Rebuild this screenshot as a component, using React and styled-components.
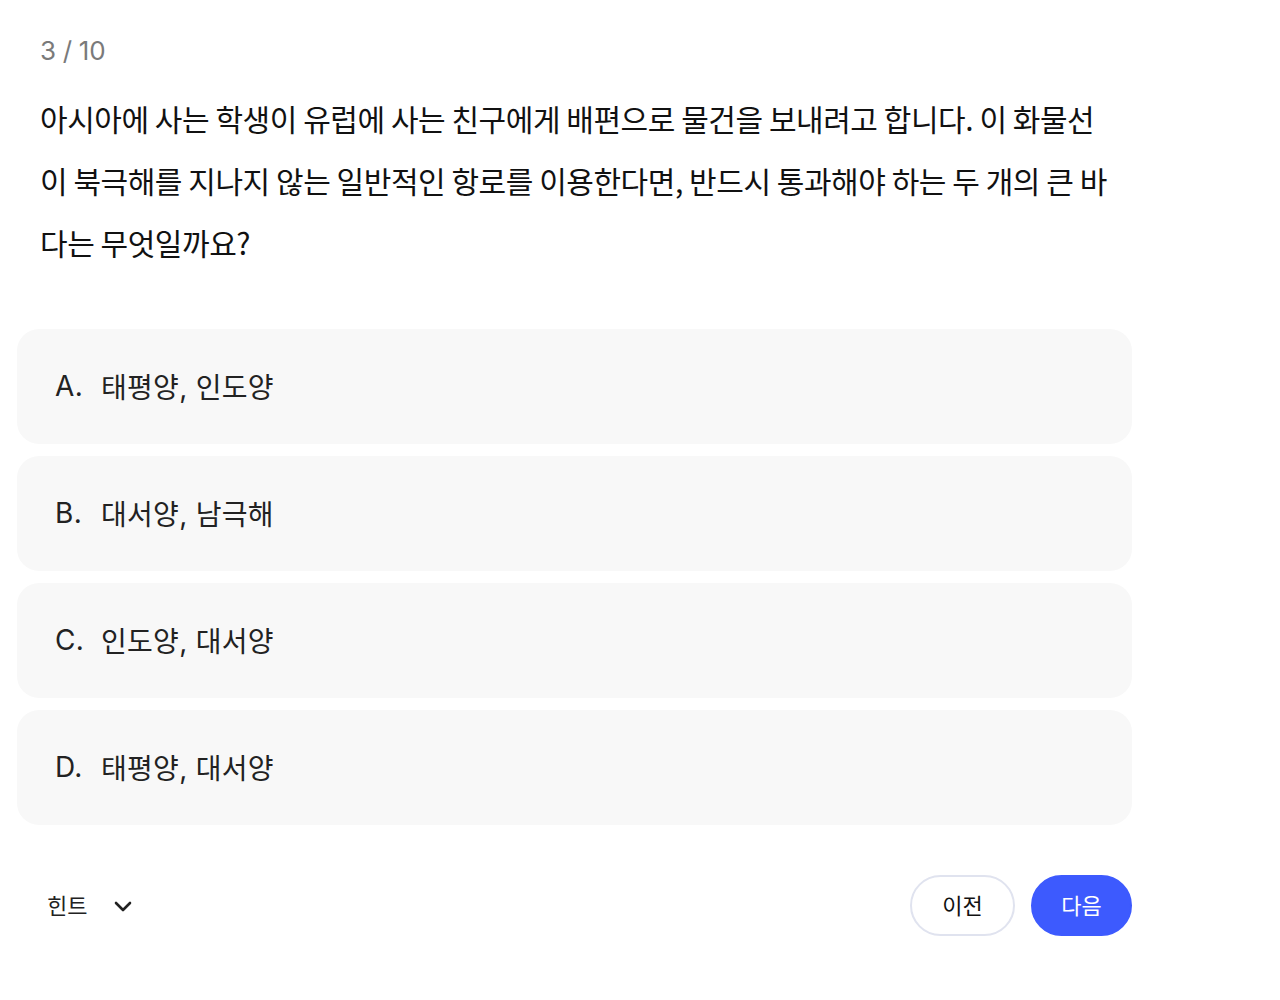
import React from 'react';
import styled, { createGlobalStyle } from 'styled-components';

const GlobalStyle = createGlobalStyle`
  *, *::before, *::after {
    box-sizing: border-box;
  }
  body {
    margin: 0;
    background: #ffffff;
    font-family: Inter, "Noto Sans CJK KR", sans-serif;
    color: #111111;
  }
`;

const question =
  '아시아에 사는 학생이 유럽에 사는 친구에게 배편으로 물건을 보내려고 합니다. 이 화물선이 북극해를 지나지 않는 일반적인 항로를 이용한다면, 반드시 통과해야 하는 두 개의 큰 바다는 무엇일까요?';

const options = [
  { key: 'A', text: '태평양, 인도양' },
  { key: 'B', text: '대서양, 남극해' },
  { key: 'C', text: '인도양, 대서양' },
  { key: 'D', text: '태평양, 대서양' },
];

const App = () => {
  return (
    <>
      <GlobalStyle />
      <Page>
        <Header>
          <Counter>3 / 10</Counter>
          <Question>{question}</Question>
        </Header>
        <OptionList>
          {options.map((o) => (
            <Option key={o.key}>
              <OptionKey>{o.key}.</OptionKey>
              <span>{o.text}</span>
            </Option>
          ))}
        </OptionList>
        <Footer>
          <HintToggle>
            힌트
            <svg width="24" height="24" viewBox="0 0 24 24" fill="none" stroke="#222" strokeWidth="2.6" strokeLinecap="round" strokeLinejoin="round">
              <path d="M5 9l7 7 7-7" />
            </svg>
          </HintToggle>
          <NavButtons>
            <NavButton>이전</NavButton>
            <NavButton primary>다음</NavButton>
          </NavButtons>
        </Footer>
      </Page>
    </>
  );
};

export default App;

// Styled Components
const Page = styled.div`
  width: 1115px;
  margin-left: 17px;
  padding-top: 33px;
  display: flex;
  flex-direction: column;
`;

const Header = styled.div`
  padding: 0 23px;
`;

const Counter = styled.div`
  font-size: 26px;
  color: #7a7a7a;
  line-height: 36px;
  letter-spacing: -0.3px;
`;

const Question = styled.p`
  margin: 18px 0 0;
  width: 1076px;
  font-family: "Noto Sans CJK KR", sans-serif;
  font-size: 30px;
  font-weight: 400;
  line-height: 62px;
  letter-spacing: -0.45px;
  color: #111111;
  word-break: break-all;
`;

const OptionList = styled.div`
  margin-top: 56px;
  display: flex;
  flex-direction: column;
  gap: 12px;
`;

const Option = styled.div`
  height: 115px;
  display: flex;
  align-items: center;
  padding: 0 0 2px 38px;
  background: #f8f8f8;
  border-radius: 22px;
  font-family: Inter, "Noto Sans CJK KR", sans-serif;
  font-size: 28px;
  letter-spacing: 0.3px;
  color: #222222;
`;

const OptionKey = styled.span`
  width: 46px;
`;

const Footer = styled.div`
  margin-top: 50px;
  display: flex;
  justify-content: space-between;
  align-items: center;
`;

const HintToggle = styled.button`
  display: flex;
  align-items: center;
  gap: 24px;
  margin-left: 30px;
  padding: 0 0 4px;
  border: none;
  background: none;
  font-family: "Noto Sans CJK KR", sans-serif;
  font-size: 22px;
  color: #222222;
  cursor: pointer;

  svg {
    margin-top: 4px;
  }
`;

const NavButtons = styled.div`
  display: flex;
  gap: 16px;
`;

const NavButton = styled.button`
  height: 61px;
  width: ${(p) => (p.primary ? '101px' : '105px')};
  padding: 0 0 3px;
  border-radius: 31px;
  font-family: "Noto Sans CJK KR", sans-serif;
  font-size: 22px;
  cursor: pointer;
  border: 2px solid ${(p) => (p.primary ? '#3d5afe' : '#e0e3ef')};
  background: ${(p) => (p.primary ? '#3d5afe' : '#ffffff')};
  color: ${(p) => (p.primary ? '#ffffff' : '#111111')};
`;
